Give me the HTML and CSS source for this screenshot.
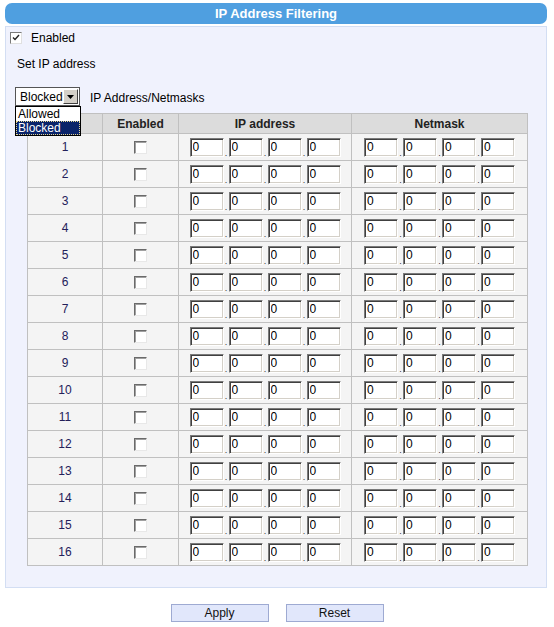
FILE: index.html
```html
<!DOCTYPE html>
<html lang="en">
<head>
    <meta charset="UTF-8">
    <meta name="viewport" content="width=device-width, initial-scale=1.0">
    <title>IP Address Filtering</title>
    <link rel="stylesheet" href="styles.css">
</head>
<body>
    <div class="title">IP Address Filtering</div>

    <div class="panel">
        <div class="enable-row">
            <span class="chk checked">
                <svg width="8" height="8" viewBox="0 0 8 8"><path d="M1 3.5 L3 5.5 L7 1" fill="none" stroke="#222" stroke-width="1.4"/></svg>
            </span>
            <span class="enable-text">Enabled</span>
        </div>

        <div class="set-label">Set IP address</div>

        <div class="mode-row">
            <div class="select">
                <span class="select-text">Blocked</span>
                <span class="select-btn">
                    <svg width="7" height="4" viewBox="0 0 7 4"><path d="M0 0 H7 L3.5 4 Z" fill="#000"/></svg>
                </span>
            </div>
            <span class="mode-text">IP Address/Netmasks</span>
            <ul class="dropdown">
                <li>Allowed</li>
                <li class="picked">Blocked</li>
            </ul>
        </div>

        <table class="filters">
            <colgroup>
                <col class="c-num">
                <col class="c-en">
                <col class="c-ip">
                <col class="c-mask">
            </colgroup>
            <thead>
                <tr>
                    <th></th>
                    <th>Enabled</th>
                    <th>IP address</th>
                    <th>Netmask</th>
                </tr>
            </thead>
            <tbody id="rows"></tbody>
        </table>
    </div>

    <div class="actions">
        <button class="btn">Apply</button>
        <button class="btn">Reset</button>
    </div>

    <script>
        function quad() {
            let html = '<div class="quad">';
            for (let i = 0; i < 4; i++) {
                if (i > 0) html += '<span class="dot">.</span>';
                html += '<input type="text" class="octet" value="0">';
            }
            return html + '</div>';
        }

        const rows = document.getElementById("rows");
        for (let n = 1; n <= 16; n++) {
            rows.innerHTML += `<tr>
                <td class="num">${n}</td>
                <td><input type="checkbox" class="row-chk"></td>
                <td>${quad()}</td>
                <td>${quad()}</td>
            </tr>`;
        }
    </script>
</body>
</html>
```

FILE: styles.css
```css
body {
    font-family: 'Liberation Sans', Arial, sans-serif;
    font-size: 12px;
    color: #000;
    margin: 0;
    padding: 3px 7px 0 5px;
    background-color: #fff;
}

.title {
    height: 21px;
    line-height: 21px;
    background-color: #4f9fe0;
    border-radius: 7px;
    color: #fff;
    font-weight: bold;
    font-size: 13px;
    text-align: center;
}

.panel {
    margin-top: 2px;
    border: 1px solid #d3def3;
    background-color: #f0f2fd;
    padding: 5px 0 21px 0;
}

.enable-row {
    display: flex;
    align-items: center;
    height: 12px;
    padding-left: 4px;
}

.chk {
    display: inline-flex;
    align-items: center;
    justify-content: center;
    box-sizing: border-box;
    width: 12px;
    height: 12px;
    border: 1px solid;
    border-color: #7a7a7a #e0e0e0 #e0e0e0 #7a7a7a;
    background-color: #fff;
}

.enable-text {
    margin-left: 9px;
}

.set-label {
    margin-top: 13px;
    line-height: 14px;
    padding-left: 11px;
}

.mode-row {
    position: relative;
    display: flex;
    align-items: center;
    margin-top: 16px;
    padding-left: 9px;
    height: 19px;
}

.select {
    display: flex;
    align-items: center;
    box-sizing: border-box;
    width: 65px;
    height: 19px;
    border: 1px solid #555;
    background-color: #fff;
    padding: 0 1px 0 4px;
}

.select-text {
    flex: 1;
}

.select-btn {
    display: flex;
    align-items: center;
    justify-content: center;
    box-sizing: border-box;
    width: 16px;
    height: 15px;
    background-color: #d4d0c8;
    border: 1px solid;
    border-color: #fff #404040 #404040 #fff;
}

.mode-text {
    margin-left: 10px;
    padding-top: 2px;
}

.dropdown {
    position: absolute;
    left: 9px;
    top: 19px;
    width: 66px;
    box-sizing: border-box;
    margin: 0;
    padding: 0;
    list-style: none;
    border: 1px solid #000;
    background-color: #fff;
    z-index: 2;
}

.dropdown li {
    height: 14px;
    line-height: 14px;
    padding-left: 2px;
}

.dropdown .picked {
    background-color: #0a246a;
    color: #fff;
    outline: 1px dotted #e8d890;
    outline-offset: -1px;
}

.filters {
    border-collapse: collapse;
    width: 500px;
    margin: 7px 0 0 21px;
    table-layout: fixed;
}

.c-num { width: 75px; }
.c-en { width: 76px; }
.c-ip { width: 173px; }
.c-mask { width: 176px; }

.filters th,
.filters td {
    border: 1px solid #c0c0c0;
    padding: 0;
    text-align: center;
}

.filters th {
    height: 19px;
    background-color: #dcdcdc;
    color: #222;
    font-size: 12px;
}

.filters td {
    height: 26px;
    background-color: #f4f4f4;
}

.num {
    color: #23205a;
}

.row-chk {
    appearance: none;
    -webkit-appearance: none;
    display: block;
    margin: 0 auto;
    box-sizing: border-box;
    width: 13px;
    height: 13px;
    border: 1px solid;
    border-color: #6a6a6a #e8e8e8 #e8e8e8 #6a6a6a;
    box-shadow: inset 1px 1px 0 #a0a0a0;
    background-color: #fff;
}

.quad {
    display: flex;
    justify-content: center;
    align-items: flex-end;
}

.octet {
    box-sizing: border-box;
    width: 34px;
    height: 19px;
    margin: 0;
    padding: 0 0 0 2px;
    border: 1px solid;
    border-color: #7a7a7a #fff #fff #7a7a7a;
    box-shadow: inset 1px 1px 0 #404040, inset -1px -1px 0 #d4d0c8;
    background-color: #fff;
    font-family: 'Liberation Sans', Arial, sans-serif;
    font-size: 12px;
    color: #000;
}

.dot {
    width: 5px;
    font-size: 9px;
    line-height: 8px;
    text-align: center;
    color: #333;
}

.actions {
    display: flex;
    justify-content: center;
    gap: 17px;
    padding: 16px 0 0 2px;
}

.btn {
    box-sizing: border-box;
    width: 98px;
    height: 18px;
    padding: 0;
    border: 1px solid #9eaad2;
    background-color: #e1e7fb;
    font-family: 'Liberation Sans', Arial, sans-serif;
    font-size: 12px;
    color: #111;
}
```
